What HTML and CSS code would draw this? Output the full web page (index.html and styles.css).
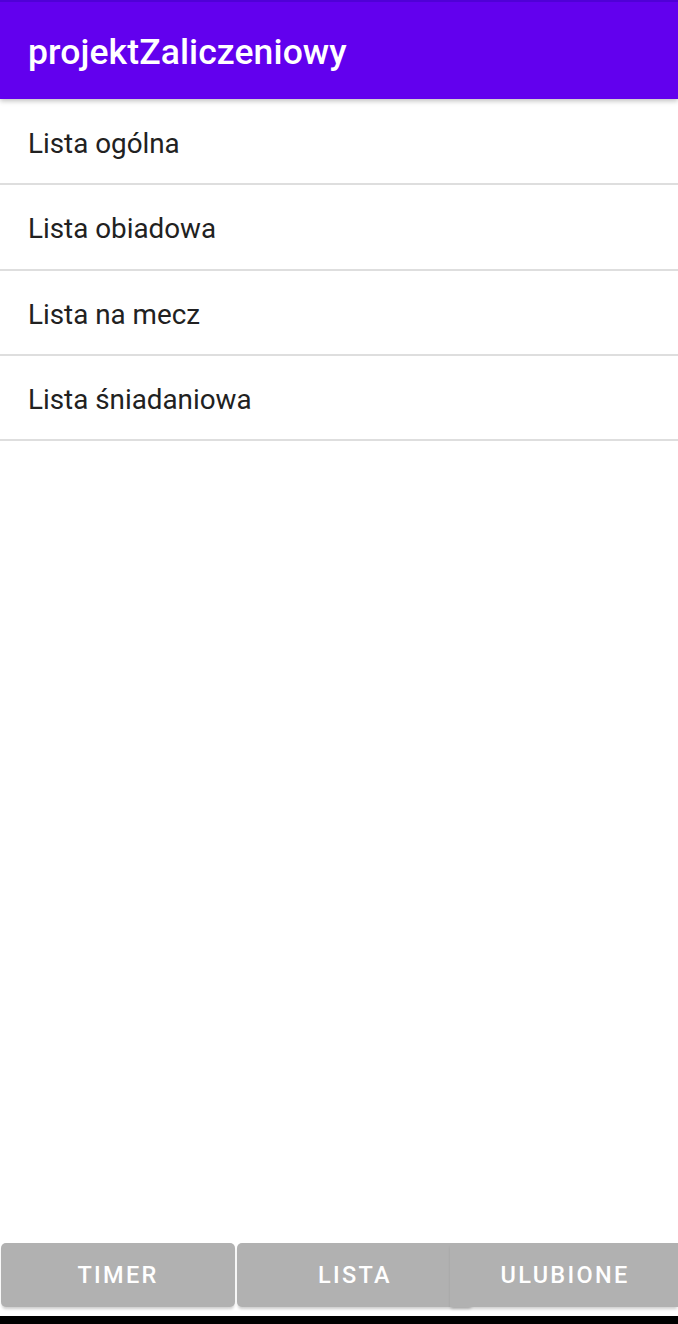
FILE: index.html
```html
<!DOCTYPE html>
<html lang="pl">
<head>
<meta charset="utf-8">
<link rel="stylesheet" href="styles.css">
<title>projektZaliczeniowy</title>
</head>
<body>
<div class="app">
  <header class="appbar">
    <h1 class="title">projektZaliczeniowy</h1>
  </header>
  <ul class="list">
    <li class="row">Lista ogólna</li>
    <li class="row">Lista obiadowa</li>
    <li class="row">Lista na mecz</li>
    <li class="row">Lista śniadaniowa</li>
  </ul>
  <div class="spacer"></div>
  <nav class="buttons">
    <button class="btn btn-timer">TIMER</button>
    <button class="btn btn-lista">LISTA</button>
    <button class="btn btn-ulub">ULUBIONE</button>
  </nav>
  <div class="navbar"></div>
</div>
</body>
</html>
```
FILE: styles.css
```css
* { box-sizing: border-box; }
html, body { margin: 0; padding: 0; background: #fff; }
body { font-family: Roboto, "Noto Sans", sans-serif; }
.app {
  width: 678px;
  height: 1324px;
  display: flex;
  flex-direction: column;
  overflow: hidden;
}
.appbar {
  height: 99px;
  flex: none;
  background: #6200ee;
  border-top: 2px solid #4f00d6;
  display: flex;
  align-items: center;
  padding-left: 28px;
  box-shadow: 0 2px 5px rgba(0,0,0,0.25);
  position: relative;
  z-index: 2;
}
.title {
  margin: 0;
  color: #fff;
  font-size: 35.5px;
  font-weight: 500;
  letter-spacing: 0.1px;
  padding-top: 2px;
}
.list {
  list-style: none;
  margin: 0;
  padding: 1px 0 0;
}
.row {
  height: 85.3px;
  display: flex;
  align-items: center;
  padding-left: 28px;
  font-size: 27.8px;
  color: #212121;
  border-bottom: 2px solid #dedede;
  padding-top: 4px;
}
.spacer { flex: 1; }
.buttons {
  flex: none;
  display: flex;
  height: 64px;
  padding-left: 1px;
  margin-bottom: 9px;
}
.btn {
  height: 64px;
  border: none;
  border-radius: 5px;
  background: #b1b1b1;
  color: #fff;
  font-family: Roboto, "Noto Sans", sans-serif;
  font-size: 23.5px;
  font-weight: 500;
  letter-spacing: 2.3px;
  padding: 0;
  box-shadow: 0 3px 3px -1px rgba(0,0,0,0.2);
}
.btn-timer { width: 234px; }
.btn-lista { width: 236px; margin-left: 2px; }
.btn-ulub { width: 228px; margin-left: -23px; position: relative; border-radius: 0; padding-left: 2px; }
.navbar {
  flex: none;
  height: 8px;
  background: #000;
}
```
